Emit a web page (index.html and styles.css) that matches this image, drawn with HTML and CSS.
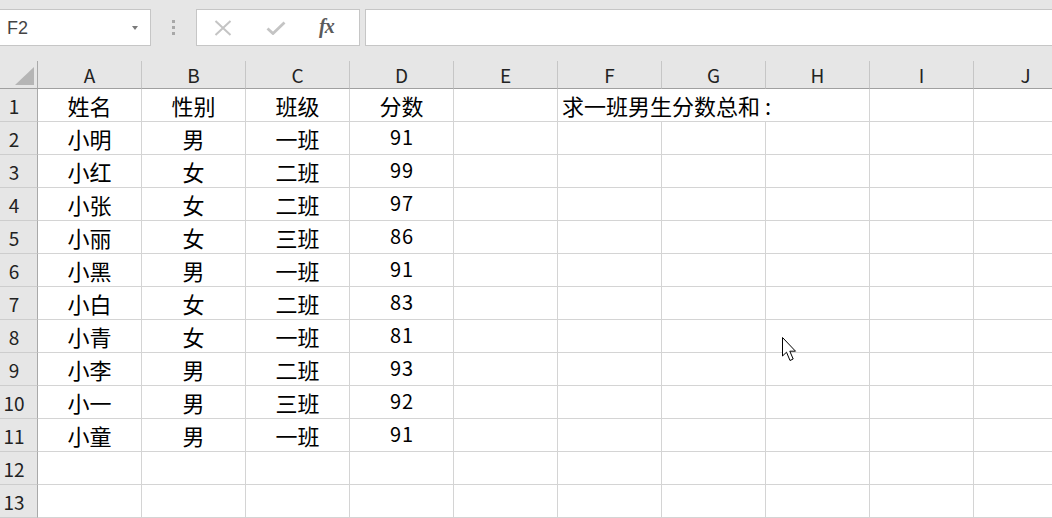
FILE: index.html
```html
<!DOCTYPE html>
<html lang="zh-CN">
<head>
<meta charset="utf-8">
<title>Sheet</title>
<link rel="stylesheet" href="styles.css">
</head>
<body>
<div class="app">
  <div class="topbar">
    <div class="namebox">
      <span class="ref">F2</span>
      <span class="caret"></span>
    </div>
    <div class="grip"><i></i><i></i><i></i></div>
    <div class="fbtns">
      <svg class="ico" width="18" height="16" viewBox="0 0 18 16"><path d="M1.5 1 L16.5 15 M16.5 1 L1.5 15" stroke="#c4c4c4" stroke-width="2" fill="none"/></svg>
      <svg class="ico" width="20" height="14" viewBox="0 0 20 14"><path d="M1.5 7.5 L7 12.5 L18.5 1.5" stroke="#c4c4c4" stroke-width="2.8" fill="none"/></svg>
      <span class="fx">fx</span>
    </div>
    <div class="finput"></div>
  </div>
  <div class="sheet">
    <div class="corner"><span class="tri"></span></div>
    <div class="ch">A</div><div class="ch">B</div><div class="ch">C</div><div class="ch">D</div><div class="ch">E</div><div class="ch">F</div><div class="ch">G</div><div class="ch">H</div><div class="ch">I</div><div class="ch">J</div>

    <div class="rh">1</div><div class="c ctr">姓名</div><div class="c ctr">性别</div><div class="c ctr">班级</div><div class="c ctr">分数</div><div class="c"></div><div class="c over">求一班男生分数总和<span class="colon">:</span></div><div class="c"></div><div class="c"></div>
    <div class="rh">2</div><div class="c ctr">小明</div><div class="c ctr">男</div><div class="c ctr">一班</div><div class="c ctr num">91</div><div class="c"></div><div class="c"></div><div class="c"></div><div class="c"></div><div class="c"></div><div class="c"></div>
    <div class="rh">3</div><div class="c ctr">小红</div><div class="c ctr">女</div><div class="c ctr">二班</div><div class="c ctr num">99</div><div class="c"></div><div class="c"></div><div class="c"></div><div class="c"></div><div class="c"></div><div class="c"></div>
    <div class="rh">4</div><div class="c ctr">小张</div><div class="c ctr">女</div><div class="c ctr">二班</div><div class="c ctr num">97</div><div class="c"></div><div class="c"></div><div class="c"></div><div class="c"></div><div class="c"></div><div class="c"></div>
    <div class="rh">5</div><div class="c ctr">小丽</div><div class="c ctr">女</div><div class="c ctr">三班</div><div class="c ctr num">86</div><div class="c"></div><div class="c"></div><div class="c"></div><div class="c"></div><div class="c"></div><div class="c"></div>
    <div class="rh">6</div><div class="c ctr">小黑</div><div class="c ctr">男</div><div class="c ctr">一班</div><div class="c ctr num">91</div><div class="c"></div><div class="c"></div><div class="c"></div><div class="c"></div><div class="c"></div><div class="c"></div>
    <div class="rh">7</div><div class="c ctr">小白</div><div class="c ctr">女</div><div class="c ctr">二班</div><div class="c ctr num">83</div><div class="c"></div><div class="c"></div><div class="c"></div><div class="c"></div><div class="c"></div><div class="c"></div>
    <div class="rh">8</div><div class="c ctr">小青</div><div class="c ctr">女</div><div class="c ctr">一班</div><div class="c ctr num">81</div><div class="c"></div><div class="c"></div><div class="c"></div><div class="c"></div><div class="c"></div><div class="c"></div>
    <div class="rh">9</div><div class="c ctr">小李</div><div class="c ctr">男</div><div class="c ctr">二班</div><div class="c ctr num">93</div><div class="c"></div><div class="c"></div><div class="c"></div><div class="c"></div><div class="c"></div><div class="c"></div>
    <div class="rh">10</div><div class="c ctr">小一</div><div class="c ctr">男</div><div class="c ctr">三班</div><div class="c ctr num">92</div><div class="c"></div><div class="c"></div><div class="c"></div><div class="c"></div><div class="c"></div><div class="c"></div>
    <div class="rh">11</div><div class="c ctr">小童</div><div class="c ctr">男</div><div class="c ctr">一班</div><div class="c ctr num">91</div><div class="c"></div><div class="c"></div><div class="c"></div><div class="c"></div><div class="c"></div><div class="c"></div>
    <div class="rh">12</div><div class="c"></div><div class="c"></div><div class="c"></div><div class="c"></div><div class="c"></div><div class="c"></div><div class="c"></div><div class="c"></div><div class="c"></div><div class="c"></div>
    <div class="rh">13</div><div class="c"></div><div class="c"></div><div class="c"></div><div class="c"></div><div class="c"></div><div class="c"></div><div class="c"></div><div class="c"></div><div class="c"></div><div class="c"></div>
  </div>
  <svg class="cursor" width="20" height="28" viewBox="0 0 20 28"><path d="M1.5 1.5 L1.5 20 L5.5 16.2 L9 24.5 L12.2 23 L8.8 15.2 L14.5 15.2 Z" fill="#fff" stroke="#000" stroke-width="1" stroke-linejoin="miter"/></svg>
</div>
</body>
</html>
```
FILE: styles.css
```css
html, body {
  margin: 0;
  padding: 0;
  background: #fff;
}
.app {
  position: relative;
  width: 1052px;
  height: 518px;
  overflow: hidden;
  font-family: "Noto Sans CJK SC", "Noto Sans", sans-serif;
  color: #000;
}
.topbar {
  height: 61px;
  background: #e6e6e6;
  display: flex;
  align-items: flex-start;
  padding-top: 9px;
  box-sizing: border-box;
}
.namebox {
  margin-left: -1px;
  width: 152px;
  height: 37px;
  box-sizing: border-box;
  background: #fff;
  border: 1px solid #c6c6c6;
  display: flex;
  align-items: center;
  justify-content: space-between;
  padding: 0 12px 0 7px;
}
.ref {
  font-family: "Liberation Sans", "Noto Sans", sans-serif;
  font-size: 18px;
  color: #444;
  line-height: 1;
  margin-top: 1px;
}
.caret {
  width: 0;
  height: 0;
  border-left: 3.5px solid transparent;
  border-right: 3.5px solid transparent;
  border-top: 4px solid #7a7a7a;
  margin-top: 1px;
}
.grip {
  width: 45px;
  height: 37px;
  display: flex;
  flex-direction: column;
  align-items: center;
  justify-content: center;
  gap: 3px;
}
.grip i {
  display: block;
  width: 3px;
  height: 3px;
  background: #a8a8a8;
}
.fbtns {
  width: 164px;
  height: 37px;
  box-sizing: border-box;
  background: #fff;
  border: 1px solid #c6c6c6;
  display: flex;
  align-items: center;
  padding-left: 17px;
  gap: 35px;
}
.fbtns .ico:nth-child(2) {
  margin-left: -1px;
}
.fx {
  font-family: "Liberation Serif", serif;
  font-style: italic;
  font-weight: bold;
  font-size: 20px;
  color: #5a5a5a;
  margin-left: -2px;
  margin-top: -3px;
  letter-spacing: -1px;
}
.finput {
  margin-left: 5px;
  flex: 1;
  height: 37px;
  box-sizing: border-box;
  background: #fff;
  border: 1px solid #c6c6c6;
  border-right: none;
}
.sheet {
  display: grid;
  grid-template-columns: 38px repeat(10, 104px);
  grid-template-rows: 28px repeat(13, 33px);
}
.sheet > div {
  box-sizing: border-box;
}
.corner {
  background: #e6e6e6;
  border-right: 1px solid #a9a9a9;
  border-bottom: 1px solid #a0a0a0;
  position: relative;
}
.tri {
  position: absolute;
  right: 3px;
  bottom: 3px;
  width: 0;
  height: 0;
  border-left: 19px solid transparent;
  border-bottom: 18px solid #b5b5b5;
}
.ch {
  background: #e6e6e6;
  border-bottom: 1px solid #a0a0a0;
  border-right: 1px solid #c6c6c6;
  display: flex;
  justify-content: center;
  align-items: flex-end;
  font-size: 19px;
  line-height: 26px;
  color: #222;
}
.rh {
  background: #e6e6e6;
  border-right: 1px solid #a9a9a9;
  border-bottom: 1px solid #cdcdcd;
  display: flex;
  justify-content: center;
  align-items: flex-end;
  padding-right: 9px;
  padding-bottom: 1px;
  font-size: 19px;
  line-height: 28px;
  color: #222;
}
.c {
  border-right: 1px solid #d4d4d4;
  border-bottom: 1px solid #d4d4d4;
  display: flex;
  align-items: flex-end;
  font-size: 22px;
  line-height: 31px;
  padding-bottom: 0;
  white-space: nowrap;
  background: #fff;
}
.ctr {
  justify-content: center;
}
.num {
  font-size: 20px;
  letter-spacing: 1px;
  padding-bottom: 2px;
  padding-left: 1px;
}
.over {
  grid-column: span 3;
  padding-left: 4px;
}
.colon {
  margin-left: 5px;
}
.cursor {
  position: absolute;
  left: 781px;
  top: 336px;
}
```
